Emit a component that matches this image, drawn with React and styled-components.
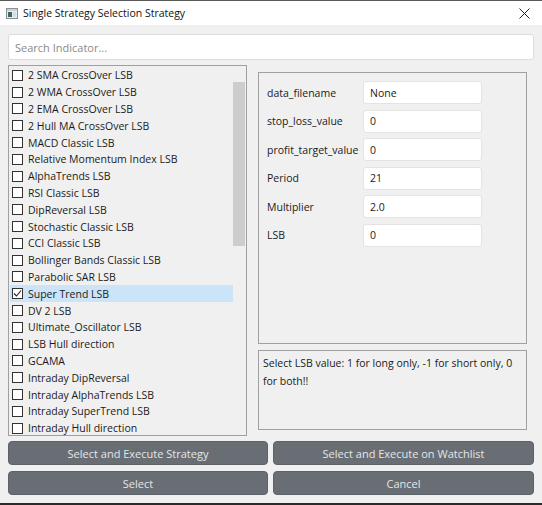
import React from 'react';
import styled, { createGlobalStyle } from 'styled-components';

const GlobalStyle = createGlobalStyle`
  html, body {
    margin: 0;
    padding: 0;
    background: #2b2b2b;
  }
  * {
    box-sizing: border-box;
  }
`;

const Window = styled.div`
  width: 542px;
  height: 503px;
  display: flex;
  flex-direction: column;
  background: #f0f0f0;
  border-top: 1px solid #5a5a5a;
  font-family: "Open Sans", "Noto Sans", sans-serif;
  font-size: 10.5px;
  color: #1b1b1b;
`;

const TitleBar = styled.div`
  height: 24px;
  display: flex;
  align-items: center;
  background: #ffffff;
  padding: 0 6px;
  gap: 5px;
`;

const Title = styled.span`
  flex: 1;
  font-size: 10.5px;
  color: #111;
`;

const CloseButton = styled.span`
  width: 24px;
  display: flex;
  justify-content: center;
  align-items: center;
`;

const Body = styled.div`
  flex: 1;
  display: flex;
  flex-direction: column;
  padding: 9px 8px 8px 8px;
`;

const Search = styled.div`
  height: 26px;
  display: flex;
  align-items: center;
  padding: 0 6px;
  background: #fff;
  border: 1px solid #dcdcdc;
  border-radius: 3px;
  color: #8a8a8a;
  font-size: 11px;
`;

const Main = styled.div`
  display: grid;
  grid-template-columns: 239px 269px;
  column-gap: 11px;
  margin-top: 5px;
  height: 371px;
`;

const ListBox = styled.div`
  display: flex;
  border: 1px solid #a0a0a0;
  overflow: hidden;
`;

const Items = styled.div`
  flex: 1;
  padding: 1px 0 0 1px;
`;

const Item = styled.div`
  height: 16.8px;
  display: flex;
  align-items: center;
  gap: 5px;
  padding-left: 2px;
  white-space: nowrap;
  background: ${p => (p.$selected ? '#cce4f7' : 'transparent')};
`;

const Check = styled.span`
  width: 11px;
  height: 11px;
  flex: none;
  border: 1px solid #333;
  background: #fff;
  display: flex;
  align-items: center;
  justify-content: center;
`;

const ScrollTrack = styled.div`
  width: 13px;
  padding: 16px 1px 0 0;
`;

const ScrollThumb = styled.div`
  height: 164px;
  background: #cdcdcd;
`;

const RightColumn = styled.div`
  display: flex;
  flex-direction: column;
  gap: 6px;
  padding-top: 7px;
  padding-bottom: 6px;
`;

const FormBox = styled.div`
  flex: 1;
  border: 1px solid #a0a0a0;
  padding: 8px 8px;
  display: grid;
  grid-template-columns: 96px 119px;
  grid-auto-rows: 23px;
  row-gap: 5.6px;
  align-items: center;
  align-content: start;
`;

const Label = styled.span`
  white-space: nowrap;
`;

const Field = styled.div`
  height: 23px;
  display: flex;
  align-items: center;
  padding-left: 6px;
  background: #fff;
  border: 1px solid #e3e3e3;
  border-radius: 3px;
`;

const MessageBox = styled.div`
  height: 80px;
  border: 1px solid #a0a0a0;
  padding: 3px 4px;
  line-height: 18px;
`;

const ButtonGrid = styled.div`
  display: grid;
  grid-template-columns: 260px 261px;
  column-gap: 5px;
  row-gap: 6px;
  margin-top: 5px;
`;

const Button = styled.button`
  height: 24px;
  border: 1px solid #5c6267;
  border-radius: 4px;
  background: #686e74;
  color: #e4e6e8;
  font-family: inherit;
  font-size: 11px;
  padding: 0;
`;

const strategies = [
  '2 SMA CrossOver LSB',
  '2 WMA CrossOver LSB',
  '2 EMA CrossOver LSB',
  '2 Hull MA CrossOver LSB',
  'MACD Classic LSB',
  'Relative Momentum Index LSB',
  'AlphaTrends LSB',
  'RSI Classic LSB',
  'DipReversal LSB',
  'Stochastic Classic LSB',
  'CCI Classic LSB',
  'Bollinger Bands Classic LSB',
  'Parabolic SAR LSB',
  'Super Trend LSB',
  'DV 2 LSB',
  'Ultimate_Oscillator LSB',
  'LSB Hull direction',
  'GCAMA',
  'Intraday DipReversal',
  'Intraday AlphaTrends LSB',
  'Intraday SuperTrend LSB',
  'Intraday Hull direction',
];

const params = [
  ['data_filename', 'None'],
  ['stop_loss_value', '0'],
  ['profit_target_value', '0'],
  ['Period', '21'],
  ['Multiplier', '2.0'],
  ['LSB', '0'],
];

const AppIcon = () => (
  <svg width="12" height="11" viewBox="0 0 12 11">
    <rect x="0.5" y="0.5" width="11" height="10" fill="#e8ecef" stroke="#8a9096" />
    <rect x="1" y="1" width="10" height="2" fill="#c9d3da" />
    <rect x="2" y="4" width="4" height="5" fill="#3e6a63" />
    <rect x="7" y="4" width="3" height="5" fill="#d8dde0" />
  </svg>
);

const App = () => {
  return (
    <>
      <GlobalStyle />
      <Window>
        <TitleBar>
          <AppIcon />
          <Title>Single Strategy Selection Strategy</Title>
          <CloseButton>
            <svg width="11" height="11" viewBox="0 0 11 11">
              <path d="M0.5 0.5 L10.5 10.5 M10.5 0.5 L0.5 10.5" stroke="#222" strokeWidth="1" />
            </svg>
          </CloseButton>
        </TitleBar>
        <Body>
          <Search>Search Indicator...</Search>
          <Main>
            <ListBox>
              <Items>
                {strategies.map(name => {
                  const selected = name === 'Super Trend LSB';
                  return (
                    <Item key={name} $selected={selected}>
                      <Check>
                        {selected && (
                          <svg width="9" height="9" viewBox="0 0 9 9">
                            <path d="M1 4.5 L3.5 7 L8 1.5" fill="none" stroke="#222" strokeWidth="1.1" />
                          </svg>
                        )}
                      </Check>
                      {name}
                    </Item>
                  );
                })}
              </Items>
              <ScrollTrack>
                <ScrollThumb />
              </ScrollTrack>
            </ListBox>
            <RightColumn>
              <FormBox>
                {params.map(([label, value]) => (
                  <React.Fragment key={label}>
                    <Label>{label}</Label>
                    <Field>{value}</Field>
                  </React.Fragment>
                ))}
              </FormBox>
              <MessageBox>
                Select LSB value: 1 for long only, -1 for short only, 0 for both!!
              </MessageBox>
            </RightColumn>
          </Main>
          <ButtonGrid>
            <Button>Select and Execute Strategy</Button>
            <Button>Select and Execute on Watchlist</Button>
            <Button>Select</Button>
            <Button>Cancel</Button>
          </ButtonGrid>
        </Body>
      </Window>
    </>
  );
};

export default App;
